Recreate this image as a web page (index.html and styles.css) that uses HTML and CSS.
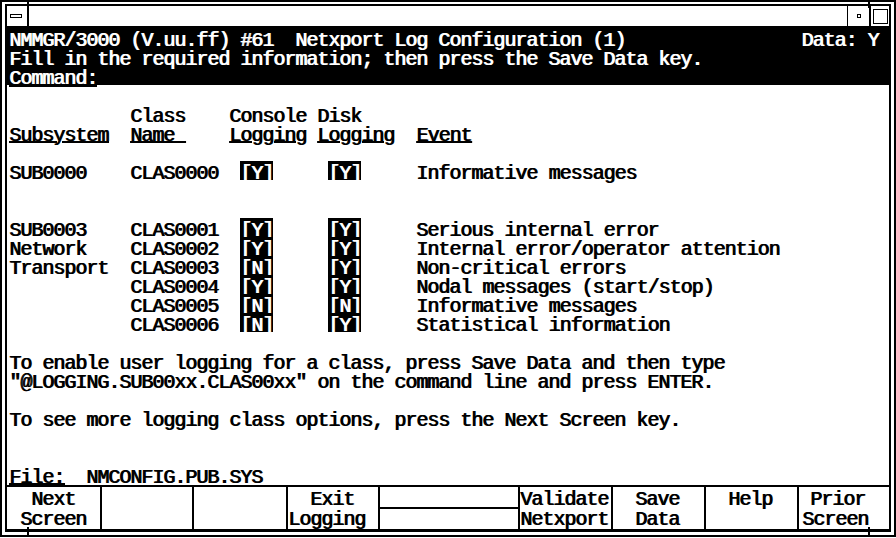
FILE: index.html
```html
<!DOCTYPE html>
<html lang="en">

<head>
	<meta charset="UTF-8">
	<title>NMMGR/3000 - Netxport Log Configuration</title>
	<link rel="stylesheet" href="styles.css">
</head>

<body>
	<div class="outer">
		<div class="inner">
			<!-- window title bar -->
			<div class="titlebar">
				<div class="tb-menu"><span class="tb-bar"></span></div>
				<div class="tb-fill"></div>
				<div class="tb-min"><span class="tb-dot"></span></div>
				<div class="tb-max"><span class="tb-sq"></span></div>
			</div>

			<!-- terminal screen, 24 lines -->
			<div class="screen">
				<div class="ln inv">NMMGR/3000 (V.uu.ff) #61  Netxport Log Configuration (1)                Data: Y</div>
				<div class="ln inv">Fill in the required information; then press the Save Data key.</div>
				<div class="ln inv"><span class="cmd">Command:</span></div>
				<div class="ln"></div>
				<div class="ln">           Class    Console Disk</div>
				<div class="ln"><span class="u">Subsystem</span>  <span class="u">Name </span>    <span class="u">Logging</span> <span class="u">Logging</span>  <span class="u">Event</span></div>
				<div class="ln"></div>
				<div class="ln">SUB0000    CLAS0000  <span class="fld">[Y]</span>     <span class="fld">[Y]</span>     Informative messages</div>
				<div class="ln"></div>
				<div class="ln"></div>
				<div class="ln">SUB0003    CLAS0001  <span class="fld">[Y]</span>     <span class="fld">[Y]</span>     Serious internal error</div>
				<div class="ln">Network    CLAS0002  <span class="fld">[Y]</span>     <span class="fld">[Y]</span>     Internal error/operator attention</div>
				<div class="ln">Transport  CLAS0003  <span class="fld">[N]</span>     <span class="fld">[Y]</span>     Non-critical errors</div>
				<div class="ln">           CLAS0004  <span class="fld">[Y]</span>     <span class="fld">[Y]</span>     Nodal messages (start/stop)</div>
				<div class="ln">           CLAS0005  <span class="fld">[N]</span>     <span class="fld">[N]</span>     Informative messages</div>
				<div class="ln">           CLAS0006  <span class="fld">[N]</span>     <span class="fld">[Y]</span>     Statistical information</div>
				<div class="ln"></div>
				<div class="ln">To enable user logging for a class, press Save Data and then type</div>
				<div class="ln">"@LOGGING.SUB00xx.CLAS00xx" on the command line and press ENTER.</div>
				<div class="ln"></div>
				<div class="ln">To see more logging class options, press the Next Screen key.</div>
				<div class="ln"></div>
				<div class="ln"></div>
				<div class="ln"><span class="u">File:</span>  NMCONFIG.PUB.SYS</div>
			</div>

			<!-- function key labels -->
			<div class="keys">
				<div class="key first"><span>  Next  </span><span> Screen </span></div>
				<div class="key"><span></span><span></span></div>
				<div class="key"><span></span><span></span></div>
				<div class="key"><span>  Exit  </span><span>Logging </span></div>
				<div class="key split"><span></span><span></span></div>
				<div class="key"><span>Validate</span><span>Netxport</span></div>
				<div class="key"><span>  Save  </span><span>  Data  </span></div>
				<div class="key"><span>  Help  </span><span></span></div>
				<div class="key"><span> Prior  </span><span class="nudge">Screen  </span></div>
			</div>
		</div>
	</div>
</body>

</html>
```

FILE: styles.css
```css
html,
body {
	margin: 0;
	padding: 0;
	background: #fff;
}

.outer {
	position: relative;
	box-sizing: border-box;
	width: 896px;
	height: 537px;
	border: 2px solid #000;
	padding: 2px 3px 3px 3px;
}

/* resize corner ticks */
.outer::before,
.outer::after {
	content: "";
	position: absolute;
	top: -2px;
	width: 2px;
	height: 537px;
	background: linear-gradient(#000 0 8px, transparent 8px 527px, #000 527px);
}

.outer::before {
	left: 25px;
}

.outer::after {
	left: 866px;
}

.inner {
	box-sizing: border-box;
	height: 100%;
	border: 2px solid #000;
	border-bottom-width: 3px;
	display: flex;
	flex-direction: column;
}

.titlebar {
	box-sizing: border-box;
	height: 24px;
	border-bottom: 2px solid #000;
	display: flex;
}

.tb-menu {
	width: 20px;
	border-right: 2px solid #000;
}

.tb-bar {
	display: block;
	width: 10px;
	height: 2px;
	border: 1px solid #000;
	margin: 8px 0 0 3px;
}

.tb-fill {
	flex: 1;
}

.tb-min {
	width: 21px;
	border-left: 1px solid #000;
	border-right: 2px solid #000;
	display: flex;
	align-items: center;
	justify-content: center;
}

.tb-dot {
	width: 2px;
	height: 2px;
	border: 1px solid #000;
}

.tb-max {
	width: 18px;
	display: flex;
	align-items: center;
	justify-content: center;
}

.tb-sq {
	width: 13px;
	height: 13px;
	border: 1px solid #000;
}

/* terminal text: 11px cells, 19px rows */
.screen {
	height: 456px;
	font: 20px/25px "Liberation Mono", "Courier New", monospace;
	letter-spacing: -1px;
	text-shadow: 1px 0 0 currentColor;
	color: #000;
}

.ln {
	height: 19px;
	padding-left: 2px;
	white-space: pre;
}

.inv {
	background: #000;
	color: #fff;
}

.cmd {
	display: inline-block;
	height: 21px;
	background: #000;
	vertical-align: top;
}

.u {
	text-decoration: underline;
	text-decoration-thickness: 2px;
	text-underline-offset: 0;
}

.fld {
	display: inline-block;
	height: 19px;
	background: #000;
	color: #fff;
	vertical-align: top;
}

.keys {
	box-sizing: border-box;
	flex: 1;
	margin-top: 1px;
	border-top: 2px solid #000;
	display: grid;
	grid-template-columns: 93px 92px 94px 92px 140px 93px 93px 93px 92px;
	font: 20px/26px "Liberation Mono", "Courier New", monospace;
	letter-spacing: -1px;
	text-shadow: 1px 0 0 currentColor;
}

.key {
	display: flex;
	flex-direction: column;
	border-left: 2px solid #000;
	white-space: pre;
}

.key span {
	height: 20px;
}

.key.first {
	border-left: 0;
	padding-left: 2px;
}

.key .nudge {
	padding-left: 3px;
}

.split span:first-child {
	border-bottom: 2px solid #000;
}
```
